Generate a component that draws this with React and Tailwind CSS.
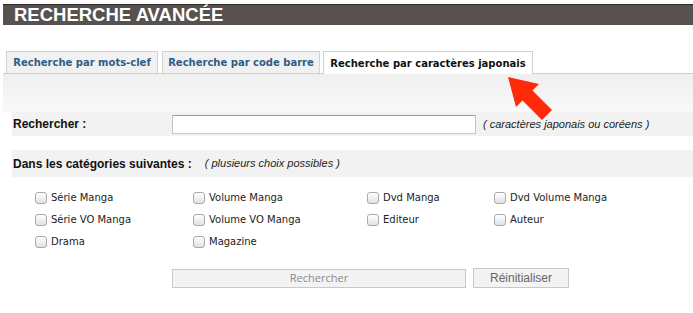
import React from "react";

const Box = () => (
  <span className="inline-block w-[12px] h-[12px] rounded-[3px] border border-[#a9a9a9] bg-gradient-to-b from-[#ffffff] to-[#e2e2e2] shadow-[inset_0_1px_0_#fff] shrink-0" />
);

const Item = ({ label }) => (
  <div className="flex items-center h-[22px]">
    <Box />
    <span className="ml-[4px] text-[10px] leading-[12px] text-[#222]" style={{ fontFamily: '"DejaVu Sans", Verdana, sans-serif' }}>
      {label}
    </span>
  </div>
);

export default function App() {
  const verd = { fontFamily: '"DejaVu Sans", Verdana, sans-serif' };
  return (
    <div className="relative w-[693px] h-[313px] bg-white overflow-hidden" style={{ fontFamily: '"Liberation Sans", Arial, sans-serif' }}>
      <div className="pt-[4px] pl-[3px]">
        <div className="h-[21px] bg-[#57524f] border-t border-[#2e2a29] text-white font-bold text-[18.5px] leading-[19px] pl-[11px]">
          RECHERCHE AVANCÉE
        </div>
      </div>

      <div className="mt-[26px] ml-[3px] flex items-end h-[23px] border-b border-[#cfcfcf]" style={verd}>
        <div className="ml-[3px] w-[152px] h-[22px] bg-[#f1f1f1] border border-b-0 border-[#d2d2d2] flex items-center justify-center text-[10px] font-bold text-[#2e5c88]">
          Recherche par mots-clef
        </div>
        <div className="ml-[4px] w-[158px] h-[22px] bg-[#f1f1f1] border border-b-0 border-[#d2d2d2] flex items-center justify-center text-[10px] font-bold text-[#2e5c88]">
          Recherche par code barre
        </div>
        <div className="ml-[3px] w-[210px] h-[23px] -mb-[1px] bg-white border border-b-0 border-[#d2d2d2] flex items-center justify-center text-[10px] font-bold text-[#111]">
          Recherche par caractères japonais
        </div>
      </div>

      <div className="ml-[3px] h-[38px] bg-gradient-to-b from-[#efefef] to-[#f9f9f9]" />

      <div className="ml-[12px] h-[24px] bg-[#f2f2f2] flex items-center">
        <div className="w-[160px] pl-[1px] text-[12px] font-bold text-[#111]">Rechercher :</div>
        <div className="w-[304px] h-[19px] bg-white border border-[#c4c4c4] border-t-[#9a9a9a]" />
        <div className="ml-[7px] text-[11px] italic text-[#222]">( caractères japonais ou coréens )</div>
      </div>

      <div className="ml-[12px] mt-[14px] h-[27px] bg-[#f2f2f2] flex items-center">
        <div className="pl-[1px] text-[12px] font-bold text-[#111]">Dans les catégories suivantes :</div>
        <div className="ml-[13px] text-[11px] italic text-[#222]">( plusieurs choix possibles )</div>
      </div>

      <div className="mt-[10px] ml-[35px] grid grid-cols-[158px_174px_127px_1fr]">
        <Item label="Série Manga" />
        <Item label="Volume Manga" />
        <Item label="Dvd Manga" />
        <Item label="Dvd Volume Manga" />
        <Item label="Série VO Manga" />
        <Item label="Volume VO Manga" />
        <Item label="Editeur" />
        <Item label="Auteur" />
        <Item label="Drama" />
        <Item label="Magazine" />
      </div>

      <div className="mt-[16px] ml-[172px] flex items-start">
        <div className="w-[294px] h-[19px] bg-[#f3f3f3] border border-[#c8c8c8] flex items-center justify-center text-[11px] text-[#8a8a8a]" style={{ fontFamily: '"Open Sans", sans-serif' }}>
          Rechercher
        </div>
        <div className="ml-[7px] -mt-[1px] w-[96px] h-[20px] bg-[#f3f3f3] border border-[#c8c8c8] flex items-center justify-center text-[12px] text-[#666]">
          Réinitialiser
        </div>
      </div>

      <svg className="absolute left-[500px] top-[70px]" width="65" height="55" viewBox="0 0 65 55">
        <polygon points="8,7 39,14 32.5,20.5 52,40 42,50 22.5,30.5 16,37" fill="#ff2a0a" />
      </svg>
    </div>
  );
}
